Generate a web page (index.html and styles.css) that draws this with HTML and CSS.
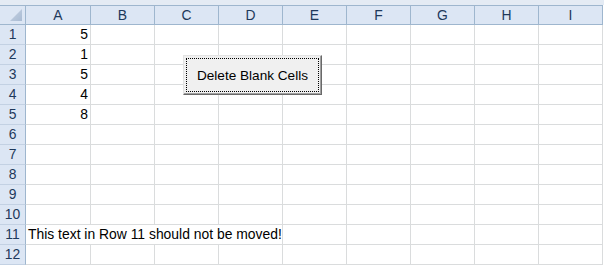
FILE: index.html
```html
<!DOCTYPE html>
<html lang="en">
<head>
    <meta charset="UTF-8">
    <title>Delete Blank Cells</title>
    <link rel="stylesheet" href="styles.css">
</head>
<body>
    <div class="sheet">
        <div class="top-strip"></div>

        <div class="row head">
            <div class="corner"><span class="tri"></span></div>
            <div class="col">A</div><div class="col">B</div><div class="col">C</div>
            <div class="col">D</div><div class="col">E</div><div class="col">F</div>
            <div class="col">G</div><div class="col">H</div><div class="col">I</div>
        </div>

        <div class="row">
            <div class="num">1</div><div class="cell val">5</div>
            <div class="cell"></div><div class="cell"></div><div class="cell"></div><div class="cell"></div>
            <div class="cell"></div><div class="cell"></div><div class="cell"></div><div class="cell"></div>
        </div>
        <div class="row">
            <div class="num">2</div><div class="cell val">1</div>
            <div class="cell"></div><div class="cell"></div><div class="cell"></div><div class="cell"></div>
            <div class="cell"></div><div class="cell"></div><div class="cell"></div><div class="cell"></div>
        </div>
        <div class="row">
            <div class="num">3</div><div class="cell val">5</div>
            <div class="cell"></div><div class="cell"></div><div class="cell"></div><div class="cell"></div>
            <div class="cell"></div><div class="cell"></div><div class="cell"></div><div class="cell"></div>
        </div>
        <div class="row">
            <div class="num">4</div><div class="cell val">4</div>
            <div class="cell"></div><div class="cell"></div><div class="cell"></div><div class="cell"></div>
            <div class="cell"></div><div class="cell"></div><div class="cell"></div><div class="cell"></div>
        </div>
        <div class="row">
            <div class="num">5</div><div class="cell val">8</div>
            <div class="cell"></div><div class="cell"></div><div class="cell"></div><div class="cell"></div>
            <div class="cell"></div><div class="cell"></div><div class="cell"></div><div class="cell"></div>
        </div>
        <div class="row">
            <div class="num">6</div><div class="cell"></div>
            <div class="cell"></div><div class="cell"></div><div class="cell"></div><div class="cell"></div>
            <div class="cell"></div><div class="cell"></div><div class="cell"></div><div class="cell"></div>
        </div>
        <div class="row">
            <div class="num">7</div><div class="cell"></div>
            <div class="cell"></div><div class="cell"></div><div class="cell"></div><div class="cell"></div>
            <div class="cell"></div><div class="cell"></div><div class="cell"></div><div class="cell"></div>
        </div>
        <div class="row">
            <div class="num">8</div><div class="cell"></div>
            <div class="cell"></div><div class="cell"></div><div class="cell"></div><div class="cell"></div>
            <div class="cell"></div><div class="cell"></div><div class="cell"></div><div class="cell"></div>
        </div>
        <div class="row">
            <div class="num">9</div><div class="cell"></div>
            <div class="cell"></div><div class="cell"></div><div class="cell"></div><div class="cell"></div>
            <div class="cell"></div><div class="cell"></div><div class="cell"></div><div class="cell"></div>
        </div>
        <div class="row">
            <div class="num">10</div><div class="cell"></div>
            <div class="cell"></div><div class="cell"></div><div class="cell"></div><div class="cell"></div>
            <div class="cell"></div><div class="cell"></div><div class="cell"></div><div class="cell"></div>
        </div>
        <div class="row">
            <div class="num">11</div>
            <div class="cell text span">This text in Row 11 should not be moved!</div>
            <div class="cell"></div><div class="cell"></div><div class="cell"></div><div class="cell"></div><div class="cell"></div>
        </div>
        <div class="row">
            <div class="num">12</div><div class="cell"></div>
            <div class="cell"></div><div class="cell"></div><div class="cell"></div><div class="cell"></div>
            <div class="cell"></div><div class="cell"></div><div class="cell"></div><div class="cell"></div>
        </div>

        <!-- command button sits on top of the grid -->
        <button class="btn" type="button"><span class="focus">Delete Blank Cells</span></button>
    </div>
</body>
</html>
```

FILE: styles.css
```css
:root {
    --head-bg: #dce6f4;
    --head-line: #9eb6ce;
    --head-sep: #c3d1e3;
    --grid: #dadcdd;
    --head-text: #1e395b;
}

body {
    margin: 0;
    background: #fff;
    font-family: "Liberation Sans", Arial, sans-serif;
    overflow: hidden;
}

.sheet {
    position: relative;
    width: 604px;
    height: 265px;
}

.top-strip {
    height: 5px;
    background: #e4ebf4;
}

.row {
    display: grid;
    grid-template-columns: 26px 65px repeat(8, 64px);
    height: 20px;
}

.row > div {
    box-sizing: border-box;
    border-right: 1px solid var(--grid);
    border-bottom: 1px solid var(--grid);
    font-size: 13.9px;
    line-height: 19px;
    white-space: nowrap;
}

/* column headers */
.head > div {
    background: var(--head-bg);
    border-top: 1px solid var(--head-line);
    border-bottom: 1px solid var(--head-line);
    border-right: 1px solid var(--head-line);
    line-height: 18px;
    text-align: center;
    color: var(--head-text);
}

.corner {
    position: relative;
}

.corner .tri {
    position: absolute;
    right: 3px;
    bottom: 3px;
    width: 12px;
    height: 12px;
    background: linear-gradient(135deg, #c6d3e3, #a9bbd3);
    clip-path: polygon(100% 0, 100% 100%, 0 100%);
}

/* row numbers */
.row > .num {
    background: var(--head-bg);
    border-right: 1px solid var(--head-line);
    border-bottom: 1px solid var(--head-sep);
    text-align: center;
    color: var(--head-text);
}

.val {
    text-align: right;
    padding-right: 2px;
}

.text {
    padding-left: 2px;
}

.span {
    grid-column: span 4;
}

/* classic windows button */
.btn {
    position: absolute;
    left: 183px;
    top: 55px;
    width: 139px;
    height: 40px;
    padding: 2px;
    margin: 0;
    background: #f0f0f0;
    border: 1px solid;
    border-color: #e3e3e3 #696969 #696969 #e3e3e3;
    box-shadow: inset -1px -1px 0 #a0a0a0;
    font-family: "Liberation Sans", Tahoma, sans-serif;
    font-size: 13.6px;
    color: #000;
}

.btn .focus {
    display: flex;
    align-items: center;
    justify-content: center;
    height: 100%;
    box-sizing: border-box;
    border: 1px dotted #000;
}
```
